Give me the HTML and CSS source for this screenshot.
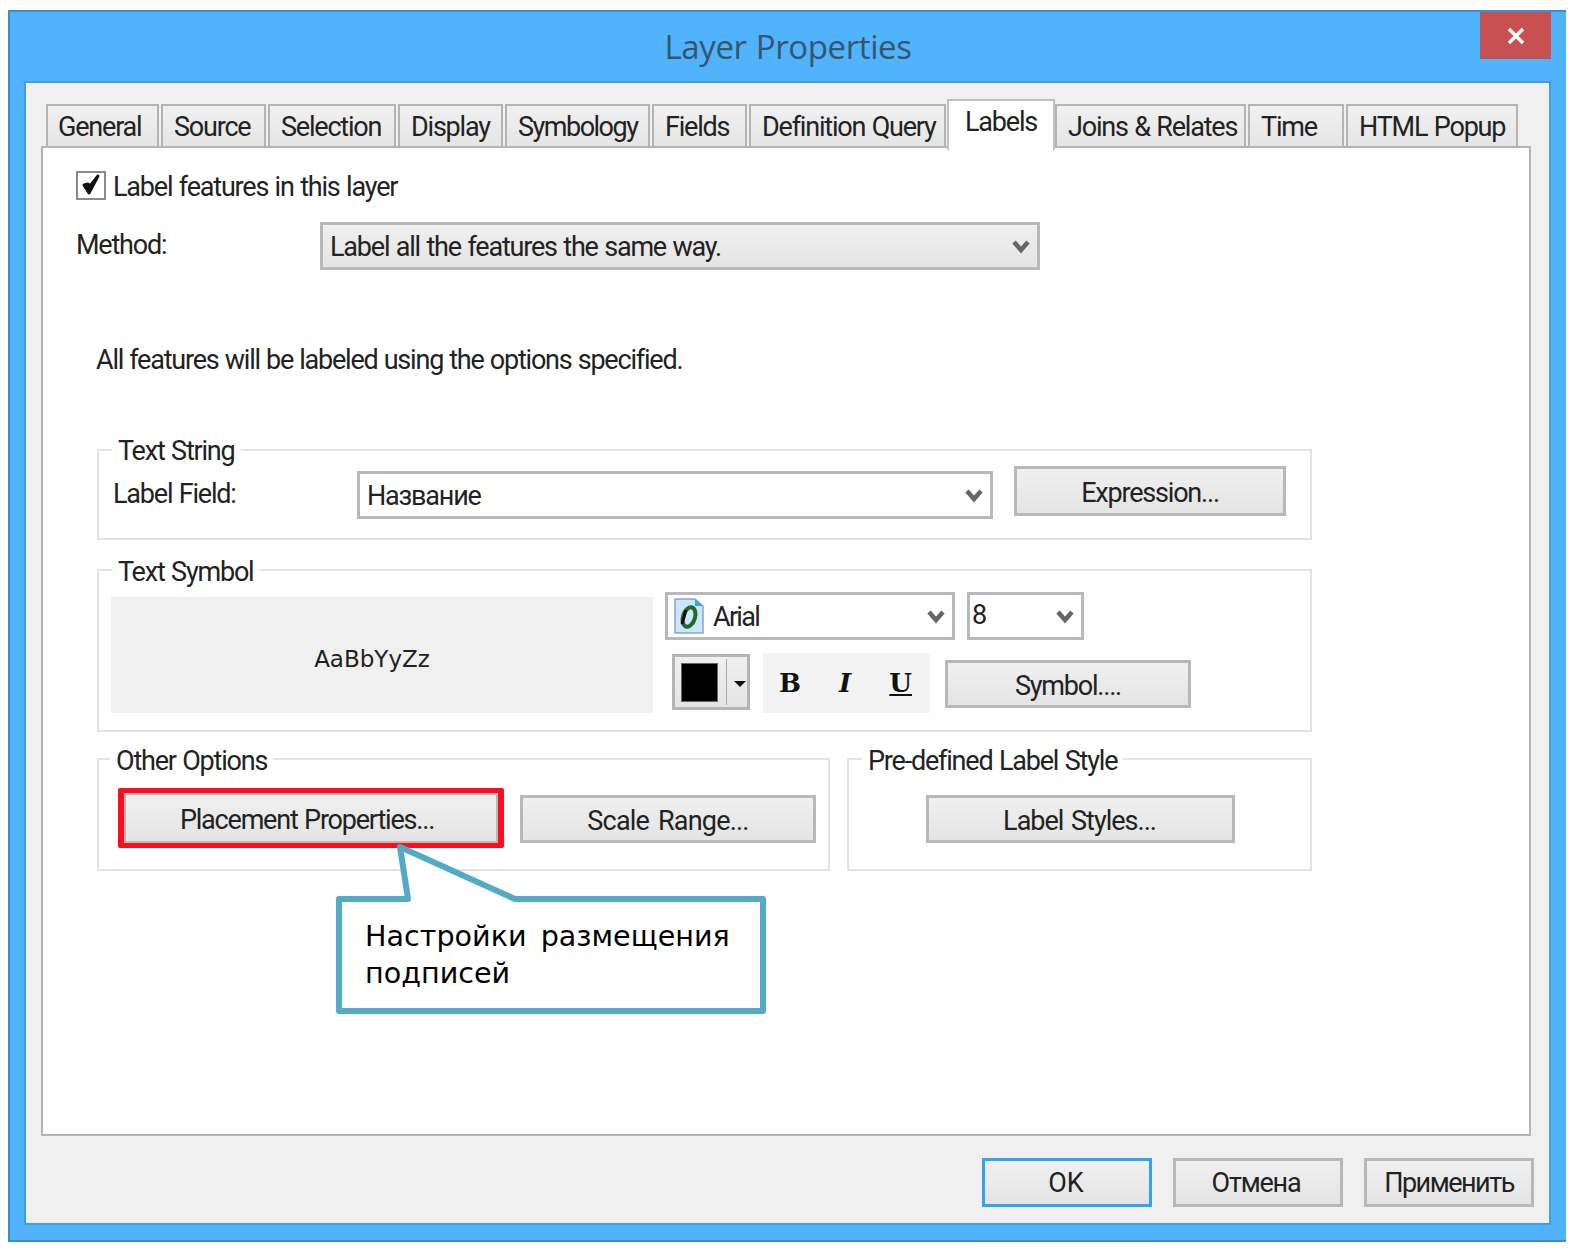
FILE: index.html
```html
<!DOCTYPE html>
<html>
<head>
	<title>Layer Properties</title>
	<meta charset="utf-8" />
	<link rel="stylesheet" href="styles.css">
</head>
<body>
	<div class="window">
		<div class="titlebar">
			<span class="title">Layer Properties</span>
			<div class="close">
				<svg width="20" height="20" viewBox="0 0 20 20"><path d="M3 3 L17 17 M17 3 L3 17" stroke="#fff" stroke-width="3.4" fill="none" /></svg>
			</div>
		</div>
		<div class="client">
			<div class="tabs">
				<div class="tab t-general">General</div>
				<div class="tab t-source">Source</div>
				<div class="tab t-selection">Selection</div>
				<div class="tab t-display">Display</div>
				<div class="tab t-symbology">Symbology</div>
				<div class="tab t-fields">Fields</div>
				<div class="tab t-query">Definition Query</div>
				<div class="tab active t-labels">Labels</div>
				<div class="tab t-joins">Joins &amp; Relates</div>
				<div class="tab t-time">Time</div>
				<div class="tab t-popup">HTML Popup</div>
			</div>
			<div class="panel">
				<div class="check-row">
					<div class="checkbox">
						<svg width="26" height="25" viewBox="0 0 26 25"><path d="M6 12 L11 20 L20 3 L12 13 L10 11 Z" fill="#111" stroke="#111" stroke-width="3" stroke-linejoin="round" /></svg>
					</div>
					<span>Label features in this layer</span>
				</div>
				<div class="method-row">
					<span class="method-label">Method:</span>
					<div class="combo combo-grey combo-method">
						<span>Label all the features the same way.</span>
						<svg class="chev" width="18" height="15" viewBox="0 0 18 15"><path d="M2 3 L9 11 L16 3" stroke="#666" stroke-width="4.5" fill="none" /></svg>
					</div>
				</div>
				<div class="note">All features will be labeled using the options specified.</div>

				<fieldset class="group group-string">
					<legend>Text String</legend>
					<div class="string-row">
						<span class="field-label">Label Field:</span>
						<div class="combo combo-field">
							<span>Название</span>
							<svg class="chev" width="18" height="15" viewBox="0 0 18 15"><path d="M2 3 L9 11 L16 3" stroke="#666" stroke-width="4.5" fill="none" /></svg>
						</div>
						<div class="btn btn-expression">Expression...</div>
					</div>
				</fieldset>

				<fieldset class="group group-symbol">
					<legend>Text Symbol</legend>
					<div class="symbol-row">
						<div class="preview">AaBbYyZz</div>
						<div class="symbol-tools">
							<div class="tools-top">
								<div class="combo combo-font">
									<svg class="font-icon" width="30" height="36" viewBox="0 0 30 36">
										<path d="M1 1 H21 L29 8 V35 H1 Z" fill="#cfe4f8" stroke="#7ba9d6" stroke-width="1.5" />
										<path d="M21 1 V8 H29 Z" fill="#3aa3ee" />
										<ellipse cx="15" cy="19" rx="6" ry="10" transform="rotate(18 15 19)" fill="none" stroke="#1e6b2c" stroke-width="4" />
										<path d="M8 26 L12 12" stroke="#111" stroke-width="3" />
									</svg>
									<span class="font-name">Arial</span>
									<svg class="chev" width="18" height="15" viewBox="0 0 18 15"><path d="M2 3 L9 11 L16 3" stroke="#666" stroke-width="4.5" fill="none" /></svg>
								</div>
								<div class="combo combo-size">
									<span>8</span>
									<svg class="chev" width="18" height="15" viewBox="0 0 18 15"><path d="M2 3 L9 11 L16 3" stroke="#666" stroke-width="4.5" fill="none" /></svg>
								</div>
							</div>
							<div class="tools-bottom">
								<div class="color-btn">
									<div class="swatch"></div>
									<div class="color-sep"></div>
									<div class="color-arrow"></div>
								</div>
								<div class="style-btns">
									<b>B</b>
									<i>I</i>
									<u>U</u>
								</div>
								<div class="btn btn-symbol">Symbol....</div>
							</div>
						</div>
					</div>
				</fieldset>

				<div class="group-pair">
					<fieldset class="group group-other">
						<legend>Other Options</legend>
						<div class="other-row">
							<div class="highlight">
								<div class="btn btn-placement">Placement Properties...</div>
							</div>
							<div class="btn btn-scale">Scale Range...</div>
						</div>
					</fieldset>
					<fieldset class="group group-style">
						<legend>Pre-defined Label Style</legend>
						<div class="style-row">
							<div class="btn btn-styles">Label Styles...</div>
						</div>
					</fieldset>
				</div>

				<div class="callout">
					<svg width="434" height="175" viewBox="0 0 434 175"><path d="M5 57 H74 L66 5 L181 57 H429 V169 H5 Z" fill="#fff" stroke="#51abc5" stroke-width="6" stroke-linejoin="round" /></svg>
					<div class="callout-text">Настройки&nbsp; размещения<br />подписей</div>
				</div>
			</div>
			<div class="footer">
				<div class="btn btn-dialog btn-default">OK</div>
				<div class="btn btn-dialog btn-cancel">Отмена</div>
				<div class="btn btn-dialog btn-apply">Применить</div>
			</div>
		</div>
	</div>
</body>
</html>
```

FILE: styles.css
```css
* {
	box-sizing: border-box;
}

body {
	margin: 0;
	background-color: #fff;
	color: #222;
	font-family: "Roboto", "Liberation Sans", sans-serif;
	font-size: 27px;
	letter-spacing: -1.2px;
	word-spacing: 1px;
}

.window {
	position: relative;
	width: 1558px;
	height: 1232px;
	margin: 10px 0 0 8px;
	padding-left: 14px;
	background-color: #51b3fb;
	border-top: 2px solid #3d8fc9;
	border-bottom: 2px solid #3d8fc9;
	border-left: 2px solid #3d8fc9;
}

.titlebar {
	height: 69px;
	margin-left: -14px;
	display: flex;
	align-items: center;
	justify-content: center;
}

.title {
	font-family: "Open Sans", sans-serif;
	font-size: 33px;
	letter-spacing: -0.4px;
	color: #35566f;
}

.close {
	position: absolute;
	top: 0;
	right: 15px;
	width: 71px;
	height: 47px;
	background-color: #c75050;
	display: flex;
	align-items: center;
	justify-content: center;
}

.client {
	width: 1527px;
	height: 1144px;
	padding: 16px 0 0 15px;
	background-color: #f0f0f0;
	border: 2px solid #3f9fe0;
}

.tabs {
	display: flex;
	align-items: flex-end;
	height: 49px;
	margin-left: 5px;
}

.tab {
	height: 44px;
	margin-right: 2px;
	padding: 3px 0 0 11px;
	line-height: 36px;
	white-space: nowrap;
	background: linear-gradient(#f1f1f1, #e4e4e4);
	border: 2px solid #b4b4b4;
	border-bottom: 0;
}

.tab.active {
	position: relative;
	height: 51px;
	margin: 0 0 -2px -1px;
	padding-top: 3px;
	background: #fff;
	border-color: #c0c0c0;
	z-index: 1;
}

.t-general { width: 113px; padding-left: 10px; }
.t-source { width: 105px; }
.t-selection { width: 128px; }
.t-display { width: 105px; }
.t-symbology { width: 145px; letter-spacing: -1.5px; }
.t-fields { width: 95px; }
.t-query { width: 197px; }
.t-labels { width: 108px; padding-left: 16px; }
.t-joins { width: 191px; }
.t-time { width: 96px; }
.t-popup { width: 172px; }

.panel {
	position: relative;
	width: 1490px;
	height: 990px;
	margin-top: -2px;
	padding: 23px 0 0 33px;
	background-color: #fff;
	border: 2px solid #b4b4b4;
}

.check-row {
	display: flex;
	align-items: center;
	height: 29px;
}

.check-row span {
	margin-top: 3px;
}

.checkbox {
	width: 30px;
	height: 29px;
	margin-right: 7px;
	border: 2px solid #8a8a8a;
}

.method-row {
	display: flex;
	align-items: center;
	height: 48px;
	margin-top: 22px;
}

.method-label {
	width: 244px;
	margin-top: -2px;
}

.combo {
	display: flex;
	align-items: center;
	height: 48px;
	padding-left: 7px;
	background-color: #fff;
	border: 3px solid #b8b8be;
}

.combo .chev {
	margin-left: auto;
	margin-right: 7px;
}

.combo span {
	margin-top: 2px;
}

.combo-grey {
	background: linear-gradient(#f0f0f0, #e4e4e4);
	border-color: #b8b8b8;
}

.combo-method {
	width: 720px;
}

.note {
	height: 30px;
	margin-top: 75px;
	padding-left: 20px;
	line-height: 30px;
	word-spacing: 0.6px;
}

.group {
	min-width: 0;
	width: 1215px;
	margin: 0 0 0 21px;
	padding: 0;
	border: 2px solid #e3e3e3;
}

.group legend {
	height: 30px;
	margin-left: 13px;
	padding: 0 6px;
	line-height: 32px;
}

.group-string {
	margin-top: 60px;
	padding: 1px 0 19px 0;
}

.string-row {
	display: flex;
	align-items: flex-start;
	padding-left: 14px;
}

.field-label {
	width: 244px;
	margin-top: 12px;
}

.combo-field {
	width: 636px;
	margin-top: 5px;
}

.btn {
	display: flex;
	align-items: center;
	justify-content: center;
	padding-top: 3px;
	background: linear-gradient(#f0f0f0, #e4e4e4);
	border: 3px solid #b8b8b8;
	white-space: nowrap;
}

.btn-expression {
	width: 272px;
	height: 50px;
	margin-left: 21px;
}

.group-symbol {
	margin-top: 15px;
	padding: 7px 0 17px 0;
}

.group-symbol legend {
	line-height: 34px;
}

.symbol-row {
	display: flex;
	align-items: flex-start;
	padding-left: 12px;
}

.preview {
	width: 542px;
	height: 116px;
	margin-top: 5px;
	padding: 8px 20px 0 0;
	display: flex;
	align-items: center;
	justify-content: center;
	background-color: #f0f0f0;
	font-family: "DejaVu Sans", sans-serif;
	font-size: 23px;
	letter-spacing: 0;
}

.symbol-tools {
	margin-left: 12px;
}

.tools-top {
	display: flex;
	gap: 12px;
}

.combo-font {
	width: 290px;
	padding-left: 6px;
}

.font-icon {
	margin-right: 9px;
}

.font-name {
	letter-spacing: -1.7px;
}

.combo-size {
	width: 117px;
	padding-left: 2px;
}

.combo-size span {
	margin-top: -3px;
}

.tools-bottom {
	display: flex;
	align-items: flex-start;
	margin-top: 13px;
}

.color-btn {
	display: flex;
	align-items: center;
	width: 78px;
	height: 56px;
	margin: 1px 0 0 7px;
	padding-left: 6px;
	background: linear-gradient(#f0f0f0, #e4e4e4);
	border: 3px solid #b4b4b4;
}

.swatch {
	width: 37px;
	height: 39px;
	background-color: #000;
	border: 1px solid #666;
}

.color-sep {
	width: 1px;
	height: 46px;
	margin-left: 8px;
	background-color: #aaa;
}

.color-arrow {
	width: 0;
	height: 0;
	margin-left: 7px;
	margin-top: 4px;
	border-top: 6px solid #111;
	border-left: 6px solid transparent;
	border-right: 6px solid transparent;
}

.style-btns {
	display: flex;
	align-items: center;
	justify-content: space-between;
	width: 167px;
	height: 60px;
	margin-left: 13px;
	padding: 0 18px 0 16px;
	background-color: #f3f3f3;
	font-family: "DejaVu Serif", serif;
	font-size: 26px;
	font-weight: bold;
	letter-spacing: 0;
	color: #111;
}

.style-btns b,
.style-btns i,
.style-btns u {
	font-weight: bold;
}

.btn-symbol {
	width: 246px;
	height: 48px;
	margin: 7px 0 0 15px;
}

.group-pair {
	display: flex;
	gap: 17px;
	width: 1215px;
	margin: 12px 0 0 21px;
}

.group-other {
	width: 733px;
	margin: 0;
	padding: 14px 0 21px 0;
}

.group-other legend {
	margin-left: 11px;
	line-height: 34px;
}

.group-style {
	width: 465px;
	margin: 0;
	padding: 21px 0 26px 0;
}

.group-style legend {
	line-height: 34px;
}

.style-row {
	padding-left: 77px;
}

.other-row {
	display: flex;
	align-items: flex-start;
	padding-left: 19px;
}

.highlight {
	width: 386px;
	height: 60px;
	border: solid #ff0d1e;
	border-width: 5px 6px;
	border-radius: 2px;
}

.btn-placement {
	height: 100%;
	padding-right: 8px;
	border-width: 2px;
}

.btn-scale {
	width: 296px;
	height: 48px;
	margin: 7px 0 0 16px;
	letter-spacing: -0.8px;
	word-spacing: 3px;
}

.btn-styles {
	width: 309px;
	height: 48px;
	padding-right: 2px;
	letter-spacing: -1px;
	word-spacing: 2px;
}

.callout {
	position: absolute;
	left: 291px;
	top: 694px;
	width: 434px;
	height: 175px;
}

.callout-text {
	position: absolute;
	left: 31px;
	top: 76px;
	line-height: 37px;
	white-space: nowrap;
	font-family: "DejaVu Sans", sans-serif;
	font-size: 28.6px;
	letter-spacing: 0;
	word-spacing: -2px;
	color: #000;
}

.footer {
	display: flex;
	justify-content: flex-end;
	gap: 21px;
	width: 1493px;
	margin-top: 22px;
}

.btn-dialog {
	width: 170px;
	height: 49px;
	padding-top: 0;
}

.btn-default {
	border-color: #33a3f0;
	padding-right: 2px;
	letter-spacing: 0;
}

.btn-cancel {
	padding-right: 4px;
}

.btn-apply {
	letter-spacing: -1.5px;
}
```
